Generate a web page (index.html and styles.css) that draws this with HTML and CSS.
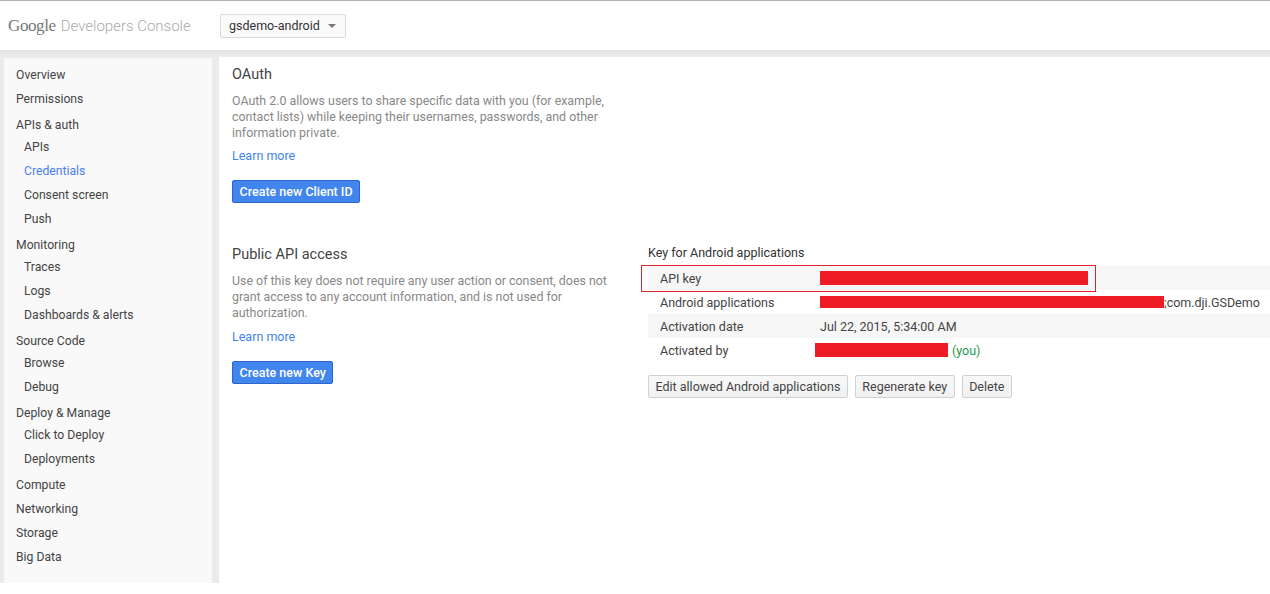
FILE: index.html
```html
<!DOCTYPE html>
<html>
<head>
<meta charset="UTF-8">
<title>Credentials - Google Developers Console</title>
<link rel="stylesheet" href="styles.css">
</head>
<body>

<div class="header">
    <div class="logo">
        <span class="logo-google">Google</span>
        <span class="logo-name">Developers Console</span>
    </div>
    <div class="project-select">
        <span>gsdemo-android</span>
        <i class="caret"></i>
    </div>
</div>

<div class="page">
    <div class="sidebar">
        <ul class="nav">
            <li class="nav-item">Overview</li>
            <li class="nav-item">Permissions</li>
            <li class="nav-item group">APIs &amp; auth</li>
            <li class="nav-sub">
                <ul>
                    <li>APIs</li>
                    <li class="on">Credentials</li>
                    <li>Consent screen</li>
                    <li>Push</li>
                </ul>
            </li>
            <li class="nav-item group">Monitoring</li>
            <li class="nav-sub">
                <ul>
                    <li>Traces</li>
                    <li>Logs</li>
                    <li>Dashboards &amp; alerts</li>
                </ul>
            </li>
            <li class="nav-item group">Source Code</li>
            <li class="nav-sub">
                <ul>
                    <li>Browse</li>
                    <li>Debug</li>
                </ul>
            </li>
            <li class="nav-item group">Deploy &amp; Manage</li>
            <li class="nav-sub">
                <ul>
                    <li>Click to Deploy</li>
                    <li>Deployments</li>
                </ul>
            </li>
            <li class="nav-item">Compute</li>
            <li class="nav-item">Networking</li>
            <li class="nav-item">Storage</li>
            <li class="nav-item">Big Data</li>
        </ul>
    </div>

    <div class="main">
        <div class="section">
            <h2>OAuth</h2>
            <p class="desc">OAuth 2.0 allows users to share specific data with you (for example, contact lists) while keeping their usernames, passwords, and other information private.</p>
            <a class="learn" href="#">Learn more</a>
            <button class="btn btn-blue">Create new Client ID</button>
        </div>

        <div class="section section-api">
            <div class="col-left">
                <h2>Public API access</h2>
                <p class="desc">Use of this key does not require any user action or consent, does not grant access to any account information, and is not used for authorization.</p>
                <a class="learn" href="#">Learn more</a>
                <button class="btn btn-blue">Create new Key</button>
            </div>
            <div class="col-right">
                <div class="key-title">Key for Android applications</div>
                <div class="key-table">
                    <div class="key-row">
                        <span class="key-label">API key</span>
                        <span class="key-value"><span class="hide hide-key"></span></span>
                    </div>
                    <div class="key-row">
                        <span class="key-label">Android applications</span>
                        <span class="key-value"><span class="hide hide-apps"></span>;com.dji.GSDemo</span>
                    </div>
                    <div class="key-row">
                        <span class="key-label">Activation date</span>
                        <span class="key-value">Jul 22, 2015, 5:34:00 AM</span>
                    </div>
                    <div class="key-row">
                        <span class="key-label">Activated by</span>
                        <span class="key-value"><span class="hide hide-user"></span> <span class="you">(you)</span></span>
                    </div>
                    <div class="mark"></div>
                </div>
                <div class="key-btns">
                    <button class="btn">Edit allowed Android applications</button>
                    <button class="btn">Regenerate key</button>
                    <button class="btn">Delete</button>
                </div>
            </div>
        </div>
    </div>
</div>

</body>
</html>
```

FILE: styles.css
```css
* {
    margin: 0;
    padding: 0;
    box-sizing: border-box;
}

html,
body {
    background: #fff;
}

body {
    font-family: Roboto, "Liberation Sans", Arial, sans-serif;
    font-size: 12.5px;
    color: #444;
}

ul {
    list-style: none;
}

a {
    text-decoration: none;
}

.header {
    display: flex;
    align-items: center;
    height: 50px;
    border-top: 1px solid #b0b0b0;
    background: #fff;
}

.logo {
    display: flex;
    align-items: baseline;
    width: 220px;
    padding-left: 8px;
}

.logo-google {
    font-family: "Liberation Serif", "DejaVu Serif", serif;
    font-size: 17px;
    color: #777;
    letter-spacing: -0.4px;
}

.logo-name {
    margin-left: 5px;
    font-size: 15px;
    font-weight: 300;
    color: #aaa;
}

.project-select {
    display: flex;
    align-items: center;
    height: 24px;
    padding: 0 9px 0 8px;
    border: 1px solid #d9d9d9;
    border-radius: 2px;
    font-size: 12.5px;
    color: #333;
    background: #fafafa;
}

.caret {
    margin-left: 8px;
    border-left: 4px solid transparent;
    border-right: 4px solid transparent;
    border-top: 4px solid #777;
}

.page {
    display: flex;
    gap: 7px;
    height: 533px;
    padding: 7px 0 0 4px;
    background: linear-gradient(#e4e4e4, #ebebeb 6px);
}

.sidebar {
    flex-shrink: 0;
    width: 208px;
    margin-top: 1px;
    padding: 5px 0 0 12px;
    font-size: 12.2px;
    background: #f9f9f9;
}

.nav-item {
    line-height: 24px;
}

.nav-item.group {
    margin-top: 2px;
}

.nav-sub {
    margin: -2px 0 2px;
}

.nav-sub li {
    padding-left: 8px;
    line-height: 24px;
}

.nav-sub li.on {
    color: #4b7ef0;
}

.main {
    flex: 1;
    min-width: 0;
    padding: 8px 0 0 13px;
    background: #fff;
}

.section h2 {
    font-size: 14.5px;
    font-weight: 400;
    line-height: 20px;
    color: #444;
}

.desc {
    width: 392px;
    margin-top: 8px;
    font-size: 12.4px;
    line-height: 16px;
    color: #888;
}

.learn {
    display: block;
    margin-top: 7px;
    line-height: 16px;
    color: #4283f0;
}

.btn {
    display: inline-block;
    height: 23px;
    padding: 0 6.5px;
    border: 1px solid #d0d0d0;
    border-radius: 2px;
    font-family: Roboto, "Liberation Sans", Arial, sans-serif;
    font-size: 12.5px;
    color: #444;
    background: linear-gradient(#f8f8f8, #f1f1f1);
}

.btn-blue {
    display: block;
    margin-top: 16px;
    border-color: #2d65c8;
    font-weight: 500;
    color: #fff;
    background: #4185ee;
}

.section-api {
    display: flex;
    margin-top: 42px;
}

.col-left {
    width: 416px;
}

.col-left .learn {
    margin-top: 8px;
}

.col-right {
    flex: 1;
}

.key-title {
    line-height: 16px;
    color: #333;
}

.key-table {
    position: relative;
    margin-top: 5px;
}

.key-row {
    display: flex;
    align-items: center;
    height: 24px;
}

.key-row:nth-child(odd) {
    background: #f6f6f6;
}

.key-label {
    width: 172px;
    padding-left: 12px;
}

.key-value {
    display: flex;
    align-items: center;
}

.hide {
    display: inline-block;
    background: #ee1c25;
}

.hide-key {
    width: 268px;
    height: 14px;
}

.hide-apps {
    width: 344px;
    height: 12px;
}

.hide-user {
    width: 133px;
    height: 14px;
    margin-left: -5px;
}

.you {
    margin-left: 4px;
    color: #1e9a4a;
}

.mark {
    position: absolute;
    top: -1px;
    left: -7px;
    width: 455px;
    height: 27px;
    box-shadow: inset 0 0 0 1px #e0242c;
}

.key-btns {
    display: flex;
    gap: 7px;
    margin-top: 13px;
}
```
